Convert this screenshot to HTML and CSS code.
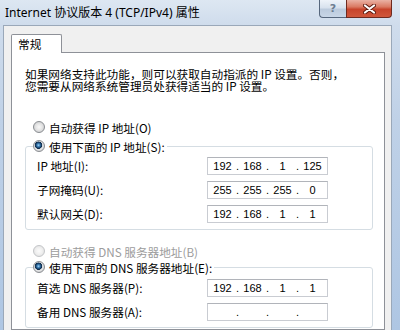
FILE: index.html
```html
<!DOCTYPE html>
<html lang="zh-CN">
<head>
<meta charset="utf-8">
<title>Internet 协议版本 4 (TCP/IPv4) 属性</title>
<link rel="stylesheet" href="styles.css">
</head>
<body>
<div class="window">
  <div class="titlebar">
    <span class="title">Internet 协议版本 4 (TCP/IPv4) 属性</span>
    <div class="caption">
      <button class="cap help">?</button>
      <button class="cap close"><svg width="13" height="10" viewBox="0 0 13 10"><path d="M2 1.5 L11 8.5 M11 1.5 L2 8.5" stroke="#5e1b10" stroke-width="4" stroke-linecap="round" fill="none"/><path d="M2 1.5 L11 8.5 M11 1.5 L2 8.5" stroke="#ffffff" stroke-width="2.2" stroke-linecap="round" fill="none"/></svg></button>
    </div>
  </div>
  <div class="dialog">
    <div class="tabs"><div class="tab">常规</div></div>
    <div class="panel">
      <p class="intro">如果网络支持此功能，则可以获取自动指派的 IP 设置。否则，<br>您需要从网络系统管理员处获得适当的 IP 设置。</p>

      <div class="radio-row first"><span class="radio"></span>自动获得 IP 地址(O)</div>
      <fieldset class="group">
        <legend class="legend"><span class="radio checked"></span>使用下面的 IP 地址(S):</legend>
        <div class="fields">
          <span class="label">IP 地址(I):</span>
          <div class="ipbox"><span class="oct">192</span><span class="dot">.</span><span class="oct">168</span><span class="dot">.</span><span class="oct">1</span><span class="dot">.</span><span class="oct">125</span></div>
          <span class="label">子网掩码(U):</span>
          <div class="ipbox"><span class="oct">255</span><span class="dot">.</span><span class="oct">255</span><span class="dot">.</span><span class="oct">255</span><span class="dot">.</span><span class="oct">0</span></div>
          <span class="label">默认网关(D):</span>
          <div class="ipbox"><span class="oct">192</span><span class="dot">.</span><span class="oct">168</span><span class="dot">.</span><span class="oct">1</span><span class="dot">.</span><span class="oct">1</span></div>
        </div>
      </fieldset>

      <div class="radio-row second disabled"><span class="radio off"></span>自动获得 DNS 服务器地址(B)</div>
      <fieldset class="group dns">
        <legend class="legend"><span class="radio checked"></span>使用下面的 DNS 服务器地址(E):</legend>
        <div class="fields">
          <span class="label">首选 DNS 服务器(P):</span>
          <div class="ipbox"><span class="oct">192</span><span class="dot">.</span><span class="oct">168</span><span class="dot">.</span><span class="oct">1</span><span class="dot">.</span><span class="oct">1</span></div>
          <span class="label">备用 DNS 服务器(A):</span>
          <div class="ipbox"><span class="oct"></span><span class="dot">.</span><span class="oct"></span><span class="dot">.</span><span class="oct"></span><span class="dot">.</span><span class="oct"></span></div>
        </div>
      </fieldset>
    </div>
  </div>
</div>
</body>
</html>
```

FILE: styles.css
```css
* { box-sizing: border-box; }
html, body { margin: 0; padding: 0; }
body {
  width: 400px;
  height: 330px;
  overflow: hidden;
  background: #c3d3e6;
  font-family: "Noto Sans CJK SC", sans-serif;
  color: #000;
}
.window {
  height: 330px;
  padding: 0 8px 0 3px;
  display: flex;
  flex-direction: column;
  background: linear-gradient(180deg, #dde7f2 0, #cfdcec 25px, #bfd1e7 120px, #aec6e3 330px);
}
.titlebar {
  height: 25px;
  display: flex;
  align-items: flex-start;
  flex: none;
}
.title {
  margin: 5px 0 0 2px;
  font: 12px/16px "Noto Sans", "Noto Sans CJK SC", sans-serif;
  color: #000;
  white-space: nowrap;
}
.caption {
  margin-left: auto;
  display: flex;
}
.cap {
  height: 18px;
  margin: 0;
  padding: 0;
  border: 1px solid #56677d;
  border-top: none;
  display: flex;
  align-items: center;
  justify-content: center;
}
.help {
  width: 27px;
  border-right: none;
  border-radius: 0 0 0 4px;
  background: linear-gradient(180deg, #eef3f9 0, #d8e2ee 45%, #bccbdd 55%, #c8d6e7 100%);
  color: #6c7d92;
  font: bold 11px/1 "DejaVu Sans", sans-serif;
}
.close {
  width: 46px;
  border-color: #6e2a1f;
  border-radius: 0 0 4px 0;
  background: linear-gradient(180deg, #eab2a4 0, #da7a63 40%, #c7442b 55%, #d0573b 100%);
}
.dialog {
  flex: 1;
  display: flex;
  flex-direction: column;
  background: #f0f0f0;
  border: 1px solid #9aa8b9;
  border-bottom: none;
  padding: 8px 6px 0 7px;
}
.tabs {
  height: 18px;
  display: flex;
  flex: none;
}
.tab {
  position: relative;
  z-index: 1;
  width: 51px;
  height: 19px;
  background: #fff;
  border: 1px solid #8e9198;
  border-bottom: none;
  border-radius: 2px 2px 0 0;
  padding: 1px 0 0 6px;
  font-size: 11.67px;
  line-height: 16px;
}
.panel {
  flex: 1;
  background: #fff;
  border: 1px solid #8e9198;
  padding: 15px 11px 0 13px;
  font-size: 11.67px;
}
.intro {
  margin: 0;
  line-height: 12px;
  white-space: nowrap;
}
.radio-row {
  display: flex;
  align-items: center;
  height: 16px;
  margin-left: 8px;
  white-space: nowrap;
}
.radio-row.first { margin-top: 27px; }
.radio-row.second { margin-top: 13px; }
.radio-row.disabled { color: #9c9c9c; }
.radio {
  flex: none;
  width: 12px;
  height: 12px;
  margin-right: 4px;
  border-radius: 50%;
  border: 1px solid #8a8d91;
  background: radial-gradient(circle at 50% 50%, #f8f8f8 0, #e6e6e6 3px, #cfd0d2 5.5px);
}
.radio.checked {
  background: radial-gradient(circle at 45% 42%, #a8d6f4 0, #3f83bb 1.4px, #1a4670 2.6px, #0d2947 3.4px, #cfd3d8 3.9px, #e8e8e8 4.6px, #d4d5d7 5.5px);
}
.radio.off {
  border-color: #c3c5c8;
  background: radial-gradient(circle at 50% 50%, #fbfbfb 0, #f1f1f1 3px, #e4e4e4 5.5px);
}
.group {
  width: 348px;
  margin: 3px 0 0 0;
  padding: 3px 0 6px 7px;
  border: 1px solid #d5dde3;
  border-radius: 3px;
}
.group.dns {
  margin-top: 0;
  padding-top: 4px;
}
.legend {
  display: flex;
  align-items: center;
  height: 16px;
  padding: 0 2px 0 0;
  white-space: nowrap;
}
.fields {
  display: grid;
  grid-template-columns: 170px 121px;
  row-gap: 6px;
  align-items: center;
  padding-left: 4px;
}
.label {
  white-space: nowrap;
  line-height: 16px;
}
.ipbox {
  height: 18px;
  display: flex;
  align-items: center;
  padding-left: 3px;
  background: #fff;
  border: 1px solid #c9ccd2;
  border-top-color: #b1b4ba;
  font: 11px/16px "Liberation Sans", Arial, sans-serif;
  color: #000;
}
.oct {
  width: 23px;
  text-align: center;
}
.dot {
  width: 7px;
  text-align: center;
}
```
